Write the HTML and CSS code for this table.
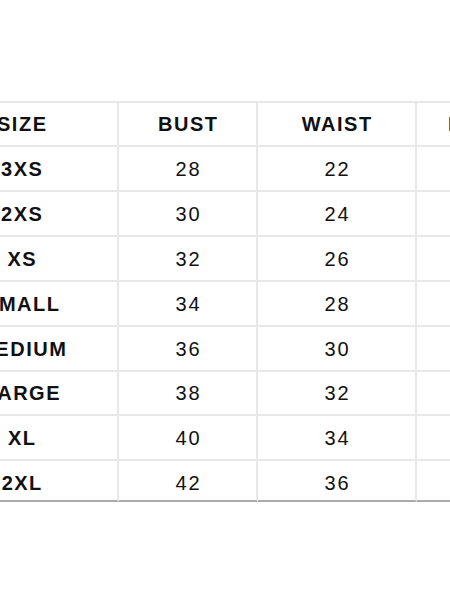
FILE: index.html
```html
<!DOCTYPE html>
<html lang="en">
<head>
<meta charset="utf-8">
<title>Size chart</title>
<link rel="stylesheet" href="styles.css">
</head>
<body>
<div class="chart" role="table">
  <div class="cell head first">SIZE</div>
  <div class="cell head">BUST</div>
  <div class="cell head">WAIST</div>
  <div class="cell head">HIPS</div>

  <div class="cell first">3XS</div><div class="cell num">28</div><div class="cell num">22</div><div class="cell num">32</div>
  <div class="cell first">2XS</div><div class="cell num">30</div><div class="cell num">24</div><div class="cell num">34</div>
  <div class="cell first">XS</div><div class="cell num">32</div><div class="cell num">26</div><div class="cell num">36</div>
  <div class="cell first">SMALL</div><div class="cell num">34</div><div class="cell num">28</div><div class="cell num">38</div>
  <div class="cell first">MEDIUM</div><div class="cell num">36</div><div class="cell num">30</div><div class="cell num">40</div>
  <div class="cell first">LARGE</div><div class="cell num">38</div><div class="cell num">32</div><div class="cell num">42</div>
  <div class="cell first">XL</div><div class="cell num">40</div><div class="cell num">34</div><div class="cell num">44</div>
  <div class="cell first last">2XL</div><div class="cell num last">42</div><div class="cell num last">36</div><div class="cell num last">46</div>
</div>
</body>
</html>
```
FILE: styles.css
```css
html, body {
  margin: 0;
  padding: 0;
  background: #ffffff;
  overflow: hidden;
}

body {
  font-family: "Liberation Sans", Arial, sans-serif;
  color: #111111;
}

.chart {
  display: grid;
  grid-template-columns: 193px 139px 159px 115px;
  grid-template-rows: 46px 45px 45px 45px 45px 45px 44px 45px 41px;
  width: 606px;
  margin: 101px 0 0 -74px;
}

.cell {
  box-sizing: border-box;
  display: flex;
  align-items: center;
  justify-content: center;
  border-right: 2px solid #e8e8e8;
  border-bottom: 2px solid #e8e8e8;
  font-size: 20px;
  line-height: 1;
  white-space: nowrap;
}

.head {
  border-top: 2px solid #e8e8e8;
  font-weight: bold;
  letter-spacing: 1.5px;
  padding-left: 1.5px;
}

.first {
  font-weight: bold;
  letter-spacing: 1.5px;
  padding-left: 1.5px;
}

.num {
  font-weight: normal;
  letter-spacing: 2px;
  padding-left: 2px;
}

.last {
  border-bottom-color: #aaaaaa;
  padding-top: 4px;
}
```
